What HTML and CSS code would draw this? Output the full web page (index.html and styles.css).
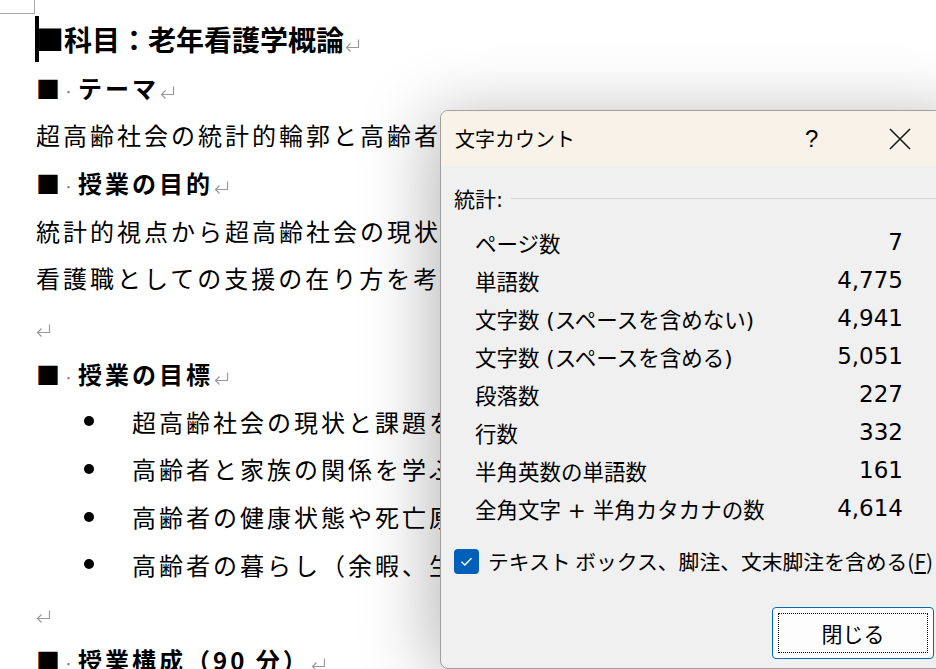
FILE: index.html
```html
<!DOCTYPE html>
<html lang="ja">
<head>
<meta charset="utf-8">
<title>文字カウント</title>
<link rel="stylesheet" href="styles.css">
</head>
<body>
<div class="doc">
  <div class="corner"></div>
  <div class="line h1"><span class="caret"></span>■科目：老年看護学概論<svg class="pm" width="15" height="13" viewBox="0 0 15 13"><path d="M13.5 0.5 V8.5 H1.5 M5.5 4.5 L1.5 8.5 L5.5 12.5" stroke="#9a9a9a" stroke-width="1.2" fill="none"/></svg></div>
  <div class="line h2">■<span class="sp">·</span>テーマ<svg class="pm" width="15" height="13" viewBox="0 0 15 13"><path d="M13.5 0.5 V8.5 H1.5 M5.5 4.5 L1.5 8.5 L5.5 12.5" stroke="#9a9a9a" stroke-width="1.2" fill="none"/></svg></div>
  <div class="line">超高齢社会の統計的輪郭と高齢者の生活と健康</div>
  <div class="line h2">■<span class="sp">·</span>授業の目的<svg class="pm" width="15" height="13" viewBox="0 0 15 13"><path d="M13.5 0.5 V8.5 H1.5 M5.5 4.5 L1.5 8.5 L5.5 12.5" stroke="#9a9a9a" stroke-width="1.2" fill="none"/></svg></div>
  <div class="line">統計的視点から超高齢社会の現状を理解し、</div>
  <div class="line">看護職としての支援の在り方を考える。</div>
  <div class="line"><svg class="pm first" width="15" height="13" viewBox="0 0 15 13"><path d="M13.5 0.5 V8.5 H1.5 M5.5 4.5 L1.5 8.5 L5.5 12.5" stroke="#9a9a9a" stroke-width="1.2" fill="none"/></svg></div>
  <div class="line h2">■<span class="sp">·</span>授業の目標<svg class="pm" width="15" height="13" viewBox="0 0 15 13"><path d="M13.5 0.5 V8.5 H1.5 M5.5 4.5 L1.5 8.5 L5.5 12.5" stroke="#9a9a9a" stroke-width="1.2" fill="none"/></svg></div>
  <div class="line item"><span class="bullet"></span>超高齢社会の現状と課題を理解する</div>
  <div class="line item"><span class="bullet"></span>高齢者と家族の関係を学ぶ</div>
  <div class="line item"><span class="bullet"></span>高齢者の健康状態や死亡原因を知る</div>
  <div class="line item"><span class="bullet"></span>高齢者の暮らし（余暇、生活）を学ぶ</div>
  <div class="line"><svg class="pm first" width="15" height="13" viewBox="0 0 15 13"><path d="M13.5 0.5 V8.5 H1.5 M5.5 4.5 L1.5 8.5 L5.5 12.5" stroke="#9a9a9a" stroke-width="1.2" fill="none"/></svg></div>
  <div class="line h2">■<span class="sp">·</span>授業構成（90 分）<svg class="pm" width="15" height="13" viewBox="0 0 15 13"><path d="M13.5 0.5 V8.5 H1.5 M5.5 4.5 L1.5 8.5 L5.5 12.5" stroke="#9a9a9a" stroke-width="1.2" fill="none"/></svg></div>
</div>

<div class="dialog">
  <div class="titlebar">
    <span class="title">文字カウント</span>
    <span class="help">?</span>
    <svg class="close" width="22" height="22" viewBox="0 0 22 22"><path d="M1 1 L21 21 M21 1 L1 21" stroke="#1a1a1a" stroke-width="1.6" fill="none"/></svg>
  </div>
  <div class="body">
    <div class="group"><span>統計:</span><span class="rule"></span></div>
    <div class="stats">
      <div class="row"><span>ページ数</span><span class="num">7</span></div>
      <div class="row"><span>単語数</span><span class="num">4,775</span></div>
      <div class="row"><span>文字数 (スペースを含めない)</span><span class="num">4,941</span></div>
      <div class="row"><span>文字数 (スペースを含める)</span><span class="num">5,051</span></div>
      <div class="row"><span>段落数</span><span class="num">227</span></div>
      <div class="row"><span>行数</span><span class="num">332</span></div>
      <div class="row"><span>半角英数の単語数</span><span class="num">161</span></div>
      <div class="row"><span>全角文字 + 半角カタカナの数</span><span class="num">4,614</span></div>
    </div>
    <div class="check">
      <span class="box"><svg width="25" height="25" viewBox="0 0 25 25"><path d="M7.5 12.8 L10.8 16 L17.5 9.3" stroke="#fff" stroke-width="1.5" fill="none"/></svg></span>
      <span class="check-label">テキスト ボックス、脚注、文末脚注を含める(<u>F</u>)</span>
    </div>
    <div class="actions"><button class="btn">閉じる</button></div>
  </div>
</div>
</body>
</html>
```

FILE: styles.css
```css
html, body {
  margin: 0;
  padding: 0;
  background: #fff;
  overflow: hidden;
  width: 936px;
  height: 669px;
}

.doc {
  position: relative;
  padding: 16px 0 0 36px;
  font-family: "Noto Sans CJK JP", sans-serif;
  color: #000;
}

.corner {
  position: absolute;
  left: 0;
  top: 0;
  width: 34px;
  height: 13px;
  border-right: 1px solid #a8a8a8;
  border-bottom: 1px solid #a8a8a8;
}

.line {
  height: 47.7px;
  line-height: 47.7px;
  font-size: 24px;
  letter-spacing: 3px;
  white-space: nowrap;
}

.h1 {
  position: relative;
  font-size: 28px;
  font-weight: bold;
  letter-spacing: 0;
}

.caret {
  position: absolute;
  left: -1px;
  top: 0;
  width: 4px;
  height: 46px;
  background: #000;
}

.h2 {
  font-size: 24px;
  font-weight: bold;
  letter-spacing: 3px;
}

.sp {
  display: inline-block;
  width: 14px;
  padding-left: 1px;
  color: #777;
  font-weight: normal;
  font-size: 16px;
  letter-spacing: 0;
}

.pm {
  display: inline-block;
  vertical-align: -1px;
  margin-left: 1px;
}

.pm.first {
  margin-left: 0;
}

.item {
  display: flex;
  align-items: center;
}

.bullet {
  display: inline-block;
  width: 10px;
  height: 10px;
  border-radius: 50%;
  background: #000;
  margin-left: 48px;
  margin-right: 38px;
}

/* dialog */
.dialog {
  position: absolute;
  left: 440px;
  top: 110px;
  width: 540px;
  height: 557px;
  border: 1px solid #9e9e9e;
  border-radius: 8px;
  background: #f0f0f0;
  overflow: hidden;
  box-shadow: -10px 6px 70px rgba(0, 0, 0, 0.28);
  font-family: "DejaVu Sans", "Noto Sans CJK JP", sans-serif;
  color: #000;
}

.titlebar {
  height: 55px;
  background: #f9f2e8;
  display: flex;
  align-items: center;
  padding-left: 14px;
  font-family: "Noto Sans CJK JP", sans-serif;
}

.title {
  font-size: 20px;
  width: 351px;
}

.help {
  font-family: "Liberation Sans", sans-serif;
  font-size: 24px;
  width: 84px;
  margin-left: -1px;
}

.body {
  padding-top: 13px;
}

.group {
  display: flex;
  align-items: center;
  height: 38px;
  padding-left: 13px;
  font-size: 21px;
}

.rule {
  flex: 1;
  height: 1px;
  background: #d6d6d6;
  margin-left: 8px;
}

.stats {
  margin: 6px 0 0 34px;
  width: 428px;
}

.row {
  display: flex;
  justify-content: space-between;
  align-items: center;
  height: 38px;
  font-size: 21.5px;
}

.num {
  font-size: 23px;
}

.check {
  display: flex;
  align-items: center;
  height: 38px;
  margin-top: 15px;
  padding-left: 13px;
  white-space: nowrap;
}

.check-label {
  font-family: "Noto Sans CJK JP", sans-serif;
  font-size: 20.8px;
}

.box {
  width: 25px;
  height: 25px;
  border-radius: 4px;
  background: #005fb8;
  margin-right: 9px;
  display: flex;
}

.actions {
  margin-top: 27px;
  padding-left: 331px;
}

.btn {
  width: 162px;
  height: 52px;
  border: 1px solid #0067c0;
  border-radius: 4px;
  background: #fdfdfd;
  outline: 1px dotted #000;
  outline-offset: -7px;
  font-family: "Noto Sans CJK JP", sans-serif;
  font-size: 21px;
  color: #000;
  padding: 0;
}
```
